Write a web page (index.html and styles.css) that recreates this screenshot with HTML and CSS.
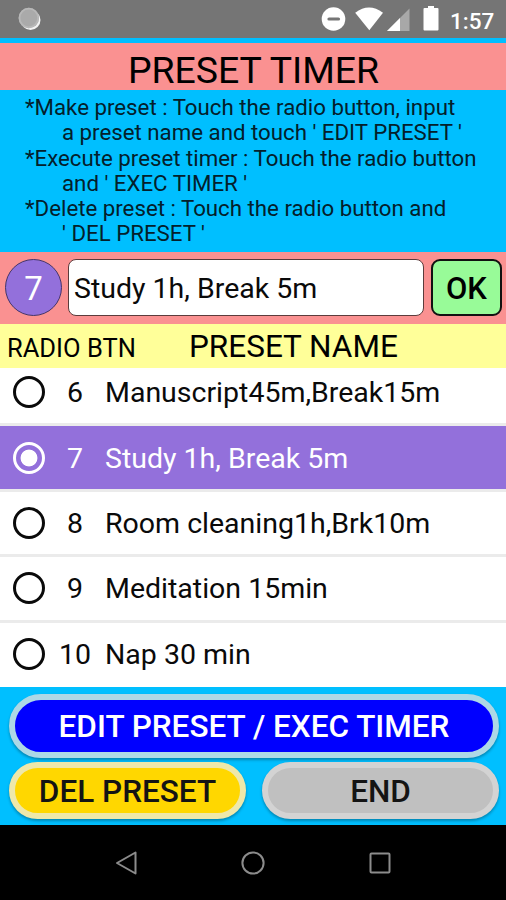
FILE: index.html
```html
<!DOCTYPE html>
<html lang="en">
<head>
    <meta charset="UTF-8">
    <meta name="viewport" content="width=device-width, initial-scale=1.0">
    <title>Preset Timer</title>
    <link rel="stylesheet" href="styles.css">
</head>
<body>
    <div class="status-bar">
        <svg class="status-dot" width="26" height="26" viewBox="0 0 26 26">
            <circle cx="13.5" cy="14" r="10" fill="#f2f2f2"/>
            <circle cx="11.8" cy="12" r="10.2" fill="#aaa"/>
            <circle cx="11.8" cy="12" r="9.3" fill="none" stroke="#b8b8b8" stroke-width="1.8"/>
        </svg>
        <svg class="status-icons" width="120" height="28" viewBox="0 0 120 28">
            <circle cx="12.5" cy="14" r="11.8" fill="#fff"/>
            <path d="M8 14h9.5" stroke="#757575" stroke-width="3.2" stroke-linecap="round"/>
            <path d="M34.2 7.7Q48 -2.700 62 7.7L48.3 25.3Z" fill="#fff"/>
            <path d="M88.500 3.500v22.500H66Z" fill="#a8a8a8"/>
            <path d="M79 13v13H66Z" fill="#fff"/>
            <path d="M103.500 3h3.500V1h6v2h3.500q1 0 1 1v20.500q0 1-1 1h-13q-1 0-1-1V4q0-1 1-1Z" fill="#fff"/>
        </svg>
        <span class="clock">1:57</span>
    </div>

    <h1 class="title">PRESET TIMER</h1>

    <div class="help">
        <p>*Make preset : Touch the radio button, input</p>
        <p class="indent">a preset name and touch ' EDIT PRESET '</p>
        <p>*Execute preset timer : Touch the radio button</p>
        <p class="indent">and ' EXEC TIMER '</p>
        <p>*Delete preset : Touch the radio button and</p>
        <p class="indent">' DEL PRESET '</p>
    </div>

    <form class="preset-form">
        <span class="number">7</span>
        <input class="name-input" type="text" value="Study 1h, Break 5m">
        <button class="ok" type="button">OK</button>
    </form>

    <div class="list-header">
        <span class="col-radio">RADIO BTN</span>
        <span class="col-name">PRESET NAME</span>
    </div>

    <div class="preset-list">
        <div class="preset">
            <span class="radio"></span>
            <span class="preset-number">6</span>
            <span class="preset-name">Manuscript45m,Break15m</span>
        </div>
        <div class="preset selected">
            <span class="radio"></span>
            <span class="preset-number">7</span>
            <span class="preset-name">Study 1h, Break 5m</span>
        </div>
        <div class="preset">
            <span class="radio"></span>
            <span class="preset-number">8</span>
            <span class="preset-name">Room cleaning1h,Brk10m</span>
        </div>
        <div class="preset">
            <span class="radio"></span>
            <span class="preset-number">9</span>
            <span class="preset-name">Meditation 15min</span>
        </div>
        <div class="preset">
            <span class="radio"></span>
            <span class="preset-number">10</span>
            <span class="preset-name">Nap 30 min</span>
        </div>
    </div>

    <div class="actions">
        <button class="btn edit" type="button">EDIT PRESET / EXEC TIMER</button>
        <button class="btn del" type="button">DEL PRESET</button>
        <button class="btn end" type="button">END</button>
    </div>

    <div class="nav-bar">
        <svg width="24" height="24" viewBox="0 0 24 24"><path d="M21.500 1.500v21L3 12Z"/></svg>
        <svg width="24" height="24" viewBox="0 0 24 24"><circle cx="12" cy="12" r="10.600"/></svg>
        <svg width="24" height="24" viewBox="0 0 24 24"><rect x="2.500" y="2.500" width="19" height="19" rx="1"/></svg>
    </div>
</body>
</html>
```

FILE: styles.css
```css
* {
    box-sizing: border-box;
}

body {
    margin: 0;
    width: 506px;
    height: 900px;
    overflow: hidden;
    display: flex;
    flex-direction: column;
    font-family: Roboto, sans-serif;
    color: #0a0a0a;
    background-color: #00bfff;
}

/* Status bar */
.status-bar {
    height: 38px;
    flex: none;
    display: flex;
    align-items: center;
    padding: 0 12px 0 17px;
    background-color: #757575;
}

.status-icons {
    margin-left: auto;
    margin-right: 9px;
}

.clock {
    width: 44px;
    padding-top: 3px;
    font-size: 22.5px;
    font-weight: 500;
    line-height: 30px;
    white-space: nowrap;
    color: #fff;
}

/* Title and help text */
.title {
    flex: none;
    height: 47px;
    margin: 5px 0 0;
    padding: 4px 0 0 1px;
    background-color: #fa9191;
    font-size: 37.4px;
    font-weight: 400;
    line-height: 47px;
    text-align: center;
    color: #000;
}

.help {
    flex: none;
    height: 162px;
    padding: 5px 0 0 25px;
    font-size: 22.25px;
    line-height: 25.3px;
    white-space: nowrap;
    color: #04202b;
}

.help p {
    margin: 0;
}

.help .indent {
    padding-left: 37px;
}

/* Selected preset */
.preset-form {
    flex: none;
    height: 72px;
    display: flex;
    padding: 7px 4px 8px 5px;
    background-color: #fa9191;
}

.number {
    width: 57px;
    height: 57px;
    margin-right: 6px;
    border: 1px solid #43356a;
    border-radius: 50%;
    background-color: #9370db;
    color: #fff;
    font-size: 33px;
    line-height: 57px;
    text-align: center;
}

.name-input {
    flex: 1;
    min-width: 0;
    height: 57px;
    margin-right: 7px;
    padding: 2px 5px 0;
    border: 1px solid #5c3c3c;
    border-radius: 8px;
    background-color: #fff;
    color: #0a0a0a;
    font-family: inherit;
    font-size: 28.5px;
}

.ok {
    width: 71px;
    height: 57px;
    padding: 1px 0 0;
    border: 2px solid #111;
    border-radius: 9px;
    background-color: #98fb98;
    color: #000;
    font-family: inherit;
    font-size: 31px;
    font-weight: 500;
}

/* Preset list */
.list-header {
    flex: none;
    height: 44px;
    display: flex;
    align-items: baseline;
    padding-left: 7px;
    background-color: #ffff99;
    line-height: 46px;
    white-space: nowrap;
    color: #000;
}

.col-radio {
    width: 182px;
    font-size: 25.5px;
}

.col-name {
    font-size: 31.5px;
}

.preset-list {
    flex: none;
    height: 319px;
    overflow: hidden;
    background-color: #fff;
}

.preset {
    height: 65.4px;
    display: flex;
    align-items: center;
    padding-left: 13px;
    border-bottom: 3px solid #ebebeb;
    font-size: 28.5px;
    white-space: nowrap;
}

.preset:first-child {
    margin-top: -7px;
}

.preset:last-child {
    border-bottom-color: transparent;
}

.preset.selected {
    background-color: #9370db;
    color: #fff;
}

.radio {
    width: 32px;
    height: 32px;
    border: 3px solid #0a0a0a;
    border-radius: 50%;
}

.selected .radio {
    border-color: #fff;
    background: radial-gradient(circle, #fff 8px, transparent 8.8px);
}

.preset-number {
    width: 60px;
    padding-top: 1px;
    text-align: center;
}

.preset-name {
    padding-top: 1px;
}

/* Buttons */
.actions {
    flex: none;
    height: 138px;
    display: grid;
    grid-template-columns: 1fr 1fr;
    grid-template-rows: 64px 57px;
    gap: 4px 16px;
    padding: 7px 7px 0 9px;
}

.btn {
    border: 6px solid #add8e6;
    border-radius: 32px;
    padding: 0;
    font-family: inherit;
    font-size: 31.5px;
    font-weight: 500;
    white-space: nowrap;
    box-shadow: 0 2px 3px rgba(0, 0, 0, 0.3);
}

.edit {
    grid-column: 1 / 3;
    background-color: #0000ff;
    color: #fff;
}

.del {
    padding-top: 1px;
    border-color: #eee8aa;
    background-color: #ffd700;
    color: #141414;
}

.end {
    padding-top: 1px;
    border-color: #d3d3d3;
    background-color: #c0c0c0;
    color: #141414;
}

/* Navigation bar */
.nav-bar {
    flex: 1;
    display: flex;
    justify-content: center;
    align-items: center;
    gap: 103px;
    background-color: #000;
}

.nav-bar svg {
    fill: none;
    stroke: #8c8c8c;
    stroke-width: 2;
    stroke-linejoin: round;
}
```
